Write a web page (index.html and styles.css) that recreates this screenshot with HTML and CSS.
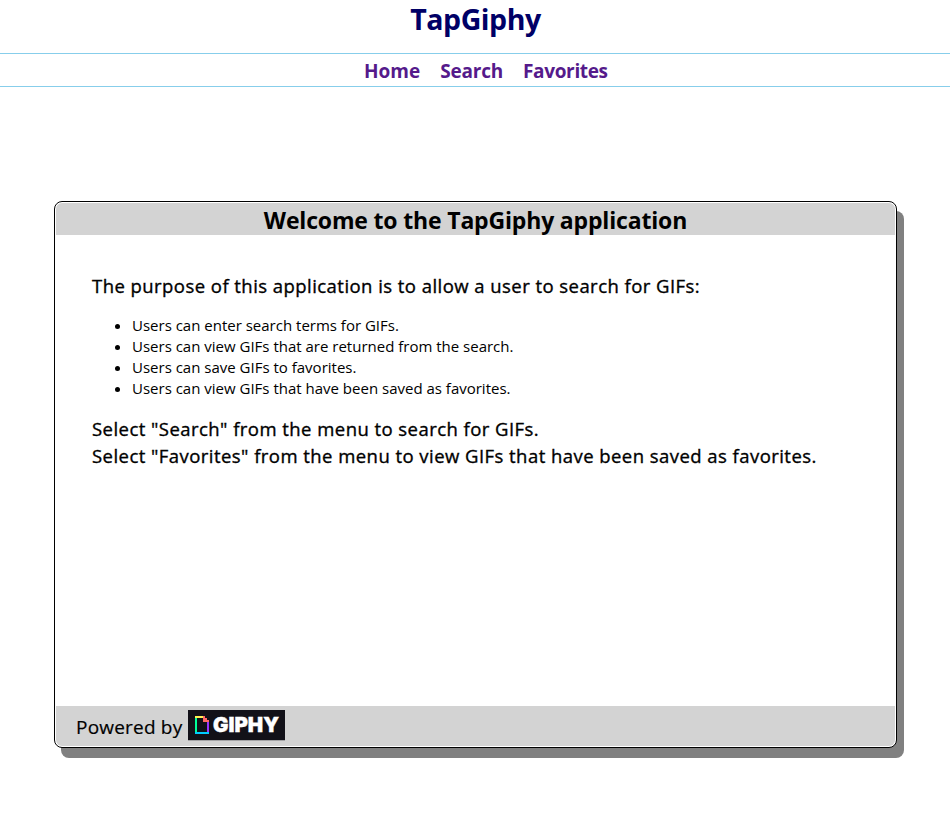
FILE: index.html
```html
<!DOCTYPE html>
<html lang="en">
<head>
<meta charset="utf-8">
<title>TapGiphy</title>
<link rel="stylesheet" href="styles.css">
</head>
<body>
<header class="site-title"><h1>TapGiphy</h1></header>
<nav class="menu">
  <a class="home" href="#">Home</a>
  <a class="search" href="#">Search</a>
  <a class="favorites" href="#">Favorites</a>
</nav>
<main class="card">
  <h2 class="card-header">Welcome to the TapGiphy application</h2>
  <section class="card-body">
    <p class="purpose">The purpose of this application is to allow a user to search for GIFs:</p>
    <ul>
      <li>Users can enter search terms for GIFs.</li>
      <li>Users can view GIFs that are returned from the search.</li>
      <li>Users can save GIFs to favorites.</li>
      <li>Users can view GIFs that have been saved as favorites.</li>
    </ul>
    <p class="hint">Select "Search" from the menu to search for GIFs.</p>
    <p class="hint">Select "Favorites" from the menu to view GIFs that have been saved as favorites.</p>
  </section>
  <footer class="card-footer">
    <span>Powered by</span>
    <svg class="logo" width="97" height="31" viewBox="0 0 97 31">
      <rect width="97" height="30" fill="#121118"/>
      <rect y="30" width="97" height="1" fill="#a3a3a5"/>
      <g shape-rendering="crispEdges">
        <path fill="#fff152" d="M7 6h8v2H7z"/>
        <path fill="#00ff99" d="M7 8h2v14H7z"/>
        <path fill="#00ccff" d="M7 22h14v2H7z"/>
        <path fill="#9933ff" d="M19 12h2v10h-2z"/>
        <path fill="#ff6666" d="M15 6h2v2h2v2h2v2h-6z"/>
      </g>
      <text class="logo-text" x="25" y="22" textLength="66" lengthAdjust="spacingAndGlyphs">GIPHY</text>
    </svg>
  </footer>
</main>
</body>
</html>
```
FILE: styles.css
```css
* { box-sizing: border-box; }
body {
  margin: 0;
  min-height: 815px;
  background: #fff;
  color: #000;
  font-family: "Open Sans", "Noto Sans", sans-serif;
}
h1, h2, p, ul { margin: 0; }
.site-title {
  height: 53px;
  text-align: center;
}
h1 {
  color: #000066;
  font-size: 28.5px;
  line-height: 39px;
  font-weight: 700;
  padding-left: 1px;
  letter-spacing: -0.45px;
}
.menu {
  display: flex;
  gap: 20px;
  height: 34px;
  padding-left: 364px;
  border-top: 1px solid #87ceeb;
  border-bottom: 1px solid #87ceeb;
  font-size: 19px;
  line-height: 34px;
  font-weight: 700;
}
.menu a { color: #551a8b; text-decoration: none; }
.menu .search { letter-spacing: -0.2px; }
.menu .favorites { letter-spacing: -0.35px; }
.card {
  display: flex;
  flex-direction: column;
  width: 843px;
  height: 547px;
  margin: 114px 0 0 54px;
  padding: 1px;
  border: 1px solid #000;
  border-radius: 8px;
  background: #fff;
  box-shadow: 7px 10px 0 #808080;
}
.card-header {
  height: 32px;
  background: #d3d3d3;
  border-radius: 6px 6px 0 0;
  font-size: 23px;
  line-height: 35px;
  font-weight: 700;
  text-align: center;
  letter-spacing: -0.17px;
}
.card-body {
  flex: 1;
  padding: 37px 36px 0;
  white-space: nowrap;
}
.purpose, .hint {
  font-size: 18.5px;
  line-height: 27px;
  letter-spacing: 0.45px;
  -webkit-text-stroke: 0.35px #000;
}
ul {
  margin: 16px 0;
  padding-left: 40px;
  font-size: 15px;
  line-height: 21px;
  font-weight: 400;
}
.card-footer {
  display: flex;
  height: 40px;
  padding: 4px 20px 0;
  gap: 6px;
  background: #d3d3d3;
  border-radius: 0 0 6px 6px;
  font-size: 19px;
  line-height: 35px;
  letter-spacing: 0.2px;
  -webkit-text-stroke: 0.2px #000;
}
.logo { -webkit-text-stroke: 0; letter-spacing: 0; }
.logo-text {
  fill: #fff;
  stroke: #fff;
  stroke-width: 0.4px;
  font: 900 20px "Inter", sans-serif;
}
```
